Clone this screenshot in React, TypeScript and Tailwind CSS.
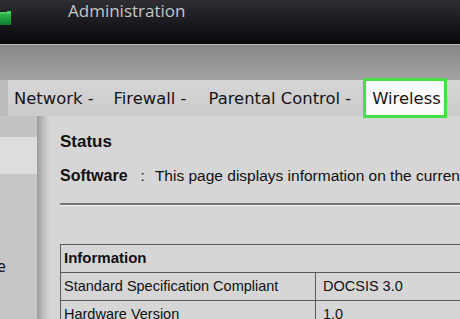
import React from "react";

export default function App() {
  const menuFont = { fontFamily: '"DejaVu Sans", Verdana, sans-serif' };
  return (
    <div
      className="w-[460px] h-[319px] overflow-hidden flex flex-col bg-[#d6d6d6]"
      style={{ fontFamily: '"Liberation Sans", Arial, sans-serif' }}
    >
      {/* Header */}
      <div className="h-[44px] shrink-0 bg-gradient-to-b from-[#2d2d32] to-[#09090d] flex items-start relative overflow-hidden">
        <div className="w-[14px] h-[44px] relative shrink-0">
          <span
            className="absolute left-[-5px] top-[-11px] text-[15px] leading-[15px] text-[#9a9a9a]"
            style={menuFont}
          >
            r
          </span>
          <svg className="absolute left-0 top-[11px]" width="12" height="15" viewBox="0 0 12 15">
            <defs>
              <linearGradient id="g1" x1="0" y1="0" x2="0" y2="1">
                <stop offset="0" stopColor="#3cc45a" />
                <stop offset="1" stopColor="#0f7d2c" />
              </linearGradient>
            </defs>
            <path d="M0 1 L7 1 L7 0 L11 0 L11 14 L0 14 Z" fill="url(#g1)" />
            <path d="M0 1 L7 1 L7 0 L11 0 L11 3 L0 3 Z" fill="#4fd46a" opacity="0.6" />
          </svg>
        </div>
        <span
          className="ml-[54px] text-[17px] leading-[22px] text-[#c6c6c6]"
          style={{ fontFamily: '"Open Sans", sans-serif' }}
        >
          Administration
        </span>
      </div>
      <div className="h-[1px] shrink-0 bg-[#b4b4b4]" />
      {/* Gray band */}
      <div className="h-[35px] shrink-0 bg-gradient-to-b from-[#868686] to-[#a4a4a4]" />
      {/* Menu */}
      <div className="h-[36px] shrink-0 flex">
        <div className="w-[8px] bg-[#bcbcbc]" />
        <div
          className="flex-1 flex items-center bg-gradient-to-b from-[#d6d6d6] to-[#cbcbcb] text-[16.4px] text-[#151515] whitespace-nowrap"
          style={menuFont}
        >
          <span className="ml-[6px] pt-[2px]">Network -</span>
          <span className="ml-[20px] pt-[2px]">Firewall -</span>
          <span className="ml-[22px] pt-[2px]">Parental Control -</span>
          <span className="ml-[12px] h-[40px] -my-[2px] flex items-center border-[3px] border-[#45e046] bg-[#fbfbfb] pl-[6px] pr-[3px] pt-[2px] z-10">
            Wireless
          </span>
        </div>
      </div>
      {/* Body */}
      <div className="flex-1 flex min-h-0">
        <div className="w-[37px] shrink-0 flex flex-col bg-[#c7c7c7]">
          <div className="h-[21px] bg-[#c2c2c2]" />
          <div className="h-[37px] bg-[#dddddd]" />
          <div className="mt-[84px] flex justify-end overflow-hidden w-[6px] text-[15px] leading-[18px] text-[#151515]" style={menuFont}>
            <span className="whitespace-nowrap">Home</span>
          </div>
        </div>
        <div className="w-[12px] shrink-0 bg-gradient-to-r from-[#9c9c9c] via-[#bdbdbd] to-[#d3d3d3]" />
        <div className="flex-1 min-w-0 pl-[11px] pt-[16px] bg-[#d6d6d6] text-[#111]">
          <div className="text-[17px] leading-[20px] font-bold">Status</div>
          <div className="mt-[14px] text-[15.5px] leading-[20px] whitespace-nowrap">
            <span className="font-bold text-[16px]">Software</span>
            <span className="ml-[13px] mr-[10px]">:</span>
            <span>This page displays information on the current system software.</span>
          </div>
          <div className="mt-[17px] h-[3px] border-t-2 border-t-[#767676] border-b border-b-[#f2f2f2]" />
          <table className="mt-[38px] border-collapse border border-[#4a4a4a] w-[480px] text-[14.5px]">
            <tbody>
              <tr className="h-[28px]">
                <td colSpan={2} className="border border-[#5a5a5a] pl-[3px] font-bold text-[15px]">
                  Information
                </td>
              </tr>
              <tr className="h-[28px]">
                <td className="w-[255px] border border-[#5a5a5a] pl-[3px]">Standard Specification Compliant</td>
                <td className="border border-[#5a5a5a] pl-[7px]">DOCSIS 3.0</td>
              </tr>
              <tr className="h-[28px]">
                <td className="w-[255px] border border-[#5a5a5a] pl-[3px]">Hardware Version</td>
                <td className="border border-[#5a5a5a] pl-[7px]">1.0</td>
              </tr>
            </tbody>
          </table>
        </div>
      </div>
    </div>
  );
}
